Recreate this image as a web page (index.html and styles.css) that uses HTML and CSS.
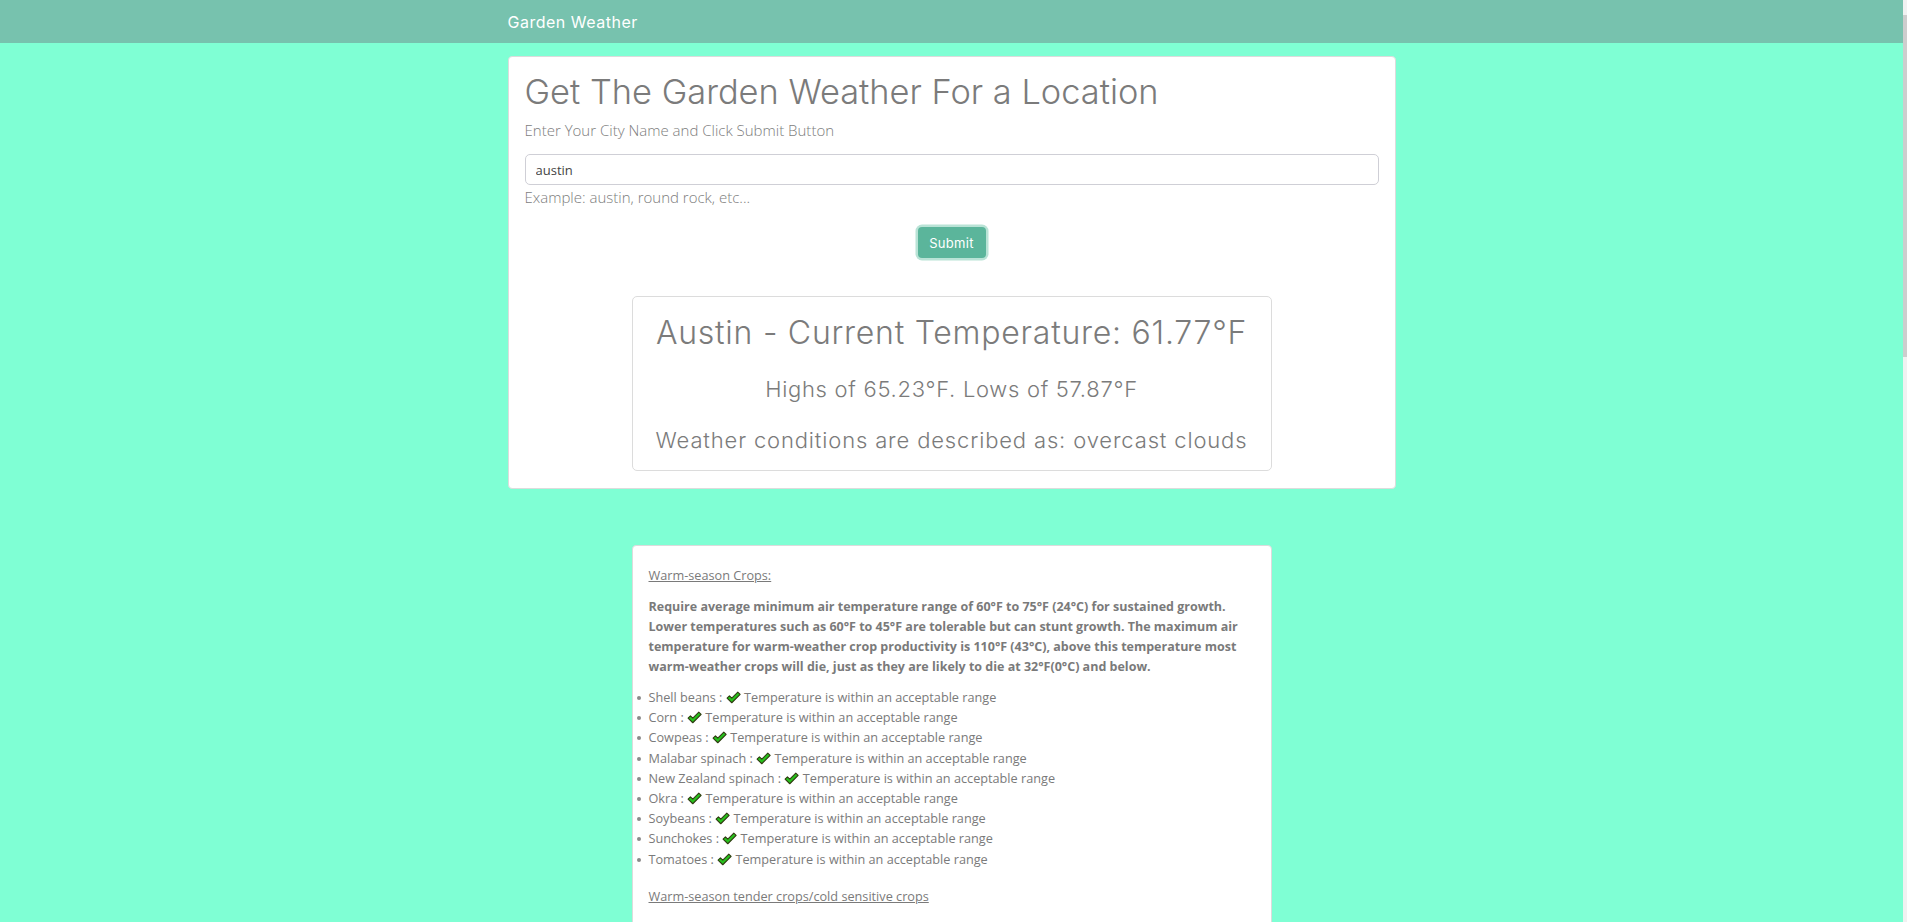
FILE: index.html
```html
<!DOCTYPE html>
<html lang="en">
<head>
<meta charset="utf-8">
<title>Garden Weather</title>
<link rel="stylesheet" href="styles.css">
</head>
<body>
<nav class="navbar">
  <div class="container">
    <span class="brand">Garden Weather</span>
  </div>
</nav>

<main class="container">
  <section class="card search-card">
    <h1 class="title">Get The Garden Weather For a Location</h1>
    <p class="lead">Enter Your City Name and Click Submit Button</p>
    <input class="city-input" type="text" value="austin">
    <p class="hint">Example: austin, round rock, etc...</p>
    <div class="btn-row">
      <button class="btn-submit" type="button">Submit</button>
    </div>
    <div class="result-card">
      <h3 class="current">Austin - Current Temperature: 61.77°F</h3>
      <p class="hilo">Highs of 65.23°F. Lows of 57.87°F</p>
      <p class="cond">Weather conditions are described as: overcast clouds</p>
    </div>
  </section>

  <section class="crops-card">
    <p class="crop-heading">Warm-season Crops:</p>
    <p class="crop-desc">Require average minimum air temperature range of 60°F to 75°F (24°C) for sustained growth. Lower temperatures such as 60°F to 45°F are tolerable but can stunt growth. The maximum air temperature for warm-weather crop productivity is 110°F (43°C), above this temperature most warm-weather crops will die, just as they are likely to die at 32°F(0°C) and below.</p>
    <ul class="crop-list">
      <li>Shell beans : <svg class="check" viewBox="0 0 14 12"><path d="M1 6.5 L3.2 4.4 L5.4 6.6 L11 1 L13.2 3.1 L5.4 10.9 Z"/></svg> Temperature is within an acceptable range</li>
      <li>Corn : <svg class="check" viewBox="0 0 14 12"><path d="M1 6.5 L3.2 4.4 L5.4 6.6 L11 1 L13.2 3.1 L5.4 10.9 Z"/></svg> Temperature is within an acceptable range</li>
      <li>Cowpeas : <svg class="check" viewBox="0 0 14 12"><path d="M1 6.5 L3.2 4.4 L5.4 6.6 L11 1 L13.2 3.1 L5.4 10.9 Z"/></svg> Temperature is within an acceptable range</li>
      <li>Malabar spinach : <svg class="check" viewBox="0 0 14 12"><path d="M1 6.5 L3.2 4.4 L5.4 6.6 L11 1 L13.2 3.1 L5.4 10.9 Z"/></svg> Temperature is within an acceptable range</li>
      <li>New Zealand spinach : <svg class="check" viewBox="0 0 14 12"><path d="M1 6.5 L3.2 4.4 L5.4 6.6 L11 1 L13.2 3.1 L5.4 10.9 Z"/></svg> Temperature is within an acceptable range</li>
      <li>Okra : <svg class="check" viewBox="0 0 14 12"><path d="M1 6.5 L3.2 4.4 L5.4 6.6 L11 1 L13.2 3.1 L5.4 10.9 Z"/></svg> Temperature is within an acceptable range</li>
      <li>Soybeans : <svg class="check" viewBox="0 0 14 12"><path d="M1 6.5 L3.2 4.4 L5.4 6.6 L11 1 L13.2 3.1 L5.4 10.9 Z"/></svg> Temperature is within an acceptable range</li>
      <li>Sunchokes : <svg class="check" viewBox="0 0 14 12"><path d="M1 6.5 L3.2 4.4 L5.4 6.6 L11 1 L13.2 3.1 L5.4 10.9 Z"/></svg> Temperature is within an acceptable range</li>
      <li>Tomatoes : <svg class="check" viewBox="0 0 14 12"><path d="M1 6.5 L3.2 4.4 L5.4 6.6 L11 1 L13.2 3.1 L5.4 10.9 Z"/></svg> Temperature is within an acceptable range</li>
    </ul>
    <p class="crop-heading second">Warm-season tender crops/cold sensitive crops</p>
  </section>
</main>

<div class="scrollbar" aria-hidden="true"><div class="scroll-thumb"></div></div>
</body>
</html>
```

FILE: styles.css
```css
html, body {
  overflow: hidden;
}

body {
  margin: 0;
  padding-right: 4px;
  background: #7fffd4;
  color: #7d7d7d;
  font-family: "Open Sans", "Noto Sans", sans-serif;
  height: 922px;
  box-sizing: border-box;
}

.scrollbar {
  position: fixed;
  top: 0;
  right: 0;
  width: 4px;
  height: 100%;
  background: #f1f1f1;
}

.scroll-thumb {
  position: absolute;
  top: 15px;
  left: 0;
  width: 4px;
  height: 342px;
  background: #cdcdcd;
}

.container {
  width: 888px;
  margin: 0 auto;
}

.navbar {
  background: #77c2ae;
  height: 43px;
  display: flex;
  align-items: center;
}

.brand {
  color: #ffffff;
  font-family: "Inter", "Open Sans", sans-serif;
  font-size: 16px;
  font-weight: 400;
  letter-spacing: 0.5px;
}

.card {
  margin-top: 13px;
  background: #fff;
  border: 1px solid #dcdcdc;
  border-radius: 4px;
  padding: 11px 16px 17px;
}

.title {
  margin: 0;
  font-family: "Inter", "Open Sans", sans-serif;
  font-weight: 300;
  font-size: 34.4px;
  line-height: 48px;
  color: #7b7b7b;
}

.lead {
  margin: 2px 0 0;
  font-size: 15px;
  font-weight: 300;
  line-height: 24px;
}

.city-input {
  display: block;
  box-sizing: border-box;
  width: 100%;
  height: 31px;
  margin-top: 12px;
  padding: 0 10px;
  border: 1px solid #cfcfd6;
  border-radius: 5px;
  font-family: "Open Sans", sans-serif;
  font-size: 13px;
  color: #444;
  outline: none;
}

.hint {
  margin: 1px 0 0;
  font-size: 15px;
  font-weight: 300;
  line-height: 22px;
}

.btn-row {
  display: flex;
  justify-content: center;
  margin-top: 19px;
}

.btn-submit {
  width: 68px;
  height: 31px;
  border: none;
  border-radius: 4px;
  background: #5bb59b;
  color: #fff;
  font-family: "Inter", sans-serif;
  font-size: 13px;
  letter-spacing: 0.3px;
  box-shadow: 0 0 0 2.5px #b9e3d6;
}

.result-card {
  width: 640px;
  box-sizing: border-box;
  margin: 38px auto 0;
  border: 1px solid #dcdcdc;
  border-radius: 5px;
  padding: 19px 4px 17px;
  text-align: center;
  font-family: "Inter", sans-serif;
  color: #7b7b7b;
}

.current {
  margin: 0;
  font-size: 32px;
  font-weight: 300;
  line-height: 34px;
  letter-spacing: 0.75px;
}

.hilo {
  margin: 26px 0 0;
  font-size: 22px;
  font-weight: 300;
  line-height: 26px;
  letter-spacing: 0.7px;
}

.cond {
  margin: 25px 0 0;
  font-size: 22px;
  font-weight: 300;
  line-height: 26px;
  letter-spacing: 0.85px;
}

.crops-card {
  width: 640px;
  box-sizing: border-box;
  margin: 56px auto 0;
  background: #fff;
  border: 1px solid #dcdcdc;
  border-radius: 4px;
  padding: 19px 16px 30px;
  font-size: 12.7px;
  color: #7a7a7a;
}

.crop-heading {
  margin: 0;
  text-decoration: underline;
  line-height: 20px;
}

.crop-heading.second {
  margin-top: 17px;
}

.crop-desc {
  margin: 12px 0 0;
  font-size: 12.5px;
  font-weight: 700;
  line-height: 20px;
}

.crop-list {
  margin: 10px 0 0;
  padding: 0;
  list-style: none;
}

.crop-list li {
  position: relative;
  line-height: 20.2px;
}

.crop-list li::before {
  content: "";
  position: absolute;
  left: -12px;
  top: 9px;
  width: 4px;
  height: 4px;
  border-radius: 50%;
  background: #8a8a8a;
}

.check {
  width: 15px;
  height: 13px;
  vertical-align: -2px;
}

.check path {
  fill: #27c21d;
  stroke: #2f3a10;
  stroke-width: 1;
  stroke-linejoin: round;
}
```
